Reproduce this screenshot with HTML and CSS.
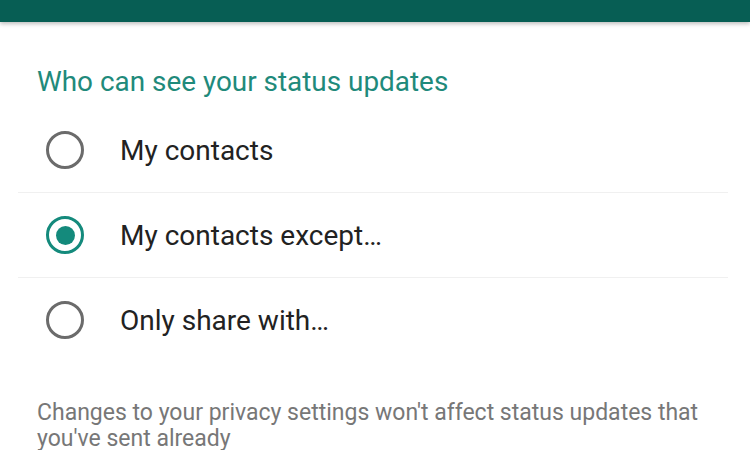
FILE: index.html
```html
<!DOCTYPE html>
<html>
<head>
    <title>Status privacy</title>
    <link rel="stylesheet" href="styles.css">
</head>
<body>
    <div class="appbar"></div>
    <div class="content">
        <h2 class="section-title">Who can see your status updates</h2>
        <div class="options">
            <div class="option">
                <span class="radio"></span>
                <span class="label">My contacts</span>
            </div>
            <div class="option">
                <span class="radio checked"></span>
                <span class="label">My contacts except…</span>
            </div>
            <div class="option">
                <span class="radio"></span>
                <span class="label">Only share with…</span>
            </div>
        </div>
        <p class="note">Changes to your privacy settings won't affect status updates that you've sent already</p>
    </div>
</body>
</html>
```

FILE: styles.css
```css
body { margin: 0; background: #fff; font-family: Roboto, "Liberation Sans", sans-serif; overflow: hidden; }
.appbar { height: 22px; background: #075e54; box-shadow: 0 2px 4px rgba(0, 0, 0, 0.25); }
.content { padding: 0 22px 0 18px; }
.section-title { margin: 44px 0 10px 19px; font-size: 27.9px; line-height: 32px; font-weight: 400; color: #1f8a7b; }
.option { display: flex; align-items: center; height: 84px; padding-left: 28px; border-bottom: 1px solid #f0f0f0; }
.option:last-child { border-bottom: none; }
.radio { width: 32px; height: 32px; border: 3.5px solid #6b6b6b; border-radius: 50%; box-sizing: content-box; display: flex; align-items: center; justify-content: center; flex-shrink: 0; }
.radio.checked { border-color: #148a7c; }
.radio.checked::after { content: ""; width: 19px; height: 19px; border-radius: 50%; background: #148a7c; }
.label { margin-left: 36px; font-size: 28px; color: #222; }
.note { margin: 38px 10px 0 19px; font-size: 23px; line-height: 26px; color: #777; }
```
